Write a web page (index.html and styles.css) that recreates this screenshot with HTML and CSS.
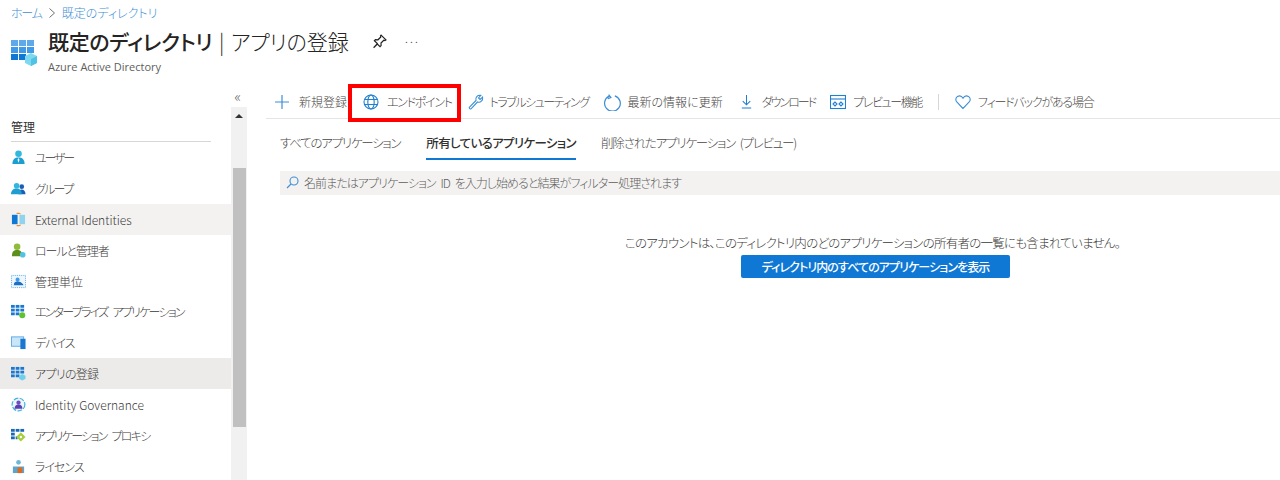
FILE: index.html
```html
<!DOCTYPE html>
<html lang="ja">
<head>
<meta charset="utf-8">
<title>アプリの登録</title>
<link rel="stylesheet" href="styles.css">
</head>
<body>
<div class="page">
  <nav class="crumbs"><a class="home">ホーム</a><svg class="chev" width="8" height="12" viewBox="0 0 8 12"><path d="M1.5 1.5 6.5 6l-5 4.500" fill="none" stroke="#707070"/></svg><a>既定のディレクトリ</a></nav>
  <header class="head">
    <svg class="logo" width="27" height="27" viewBox="0 0 27 27">
      <g fill="#3f9be8"><rect x="0" y="0" width="7" height="6" fill="#5ea9ea"/><rect x="8" y="0" width="7" height="6" fill="#5ea9ea"/><rect x="16" y="0" width="7" height="6" fill="#5ea9ea"/><rect x="0" y="7" width="7" height="6"/><rect x="8" y="7" width="7" height="6"/><rect x="16" y="7" width="7" height="6"/><rect x="0" y="14" width="7" height="6" fill="#0f78d4"/><rect x="8" y="14" width="7" height="6" fill="#0f78d4"/></g>
      <path d="M20 13l6 3v7l-6 3-6-3v-7z" fill="#7fd9ee"/><path d="M20 19l6-3v7l-6 3z" fill="#50c3e4"/>
    </svg>
    <div class="head-text">
      <div class="title-row">
        <h1 class="title"><b>既定のディレクトリ</b> <span class="pipe">|</span> <span class="title-rest">アプリの登録</span></h1>
        <svg class="pin" width="15" height="15" viewBox="0 0 14 14"><path d="M8.500 1 13 5.500l-1 .6-1-.3-2.600 2.600.1 2.400-1 1L5 9.300 1.500 12.800 5 9 2.200 6.300l1-1 2.400.1L8.200 2.800l-.3-1z" fill="none" stroke="#222" stroke-width="1.100"/></svg>
        <span class="more">···</span>
      </div>
      <div class="subtitle">Azure Active Directory</div>
    </div>
  </header>
  <div class="body">
    <aside class="side">
      <div class="collapse">«</div>
      <div class="side-inner">
        <div class="menu">
          <div class="section">管理</div>
          <div class="item t20"><svg class="ic" viewBox="0 0 16 16"><circle cx="8" cy="4" r="3.500" fill="#32b8dc"/><path d="M1.500 15c0-5 2.500-7 6.500-7s6.500 2 6.500 7z" fill="#1c9fd0"/><path d="M8 8.500l-1 2 1 3 1-3z" fill="#fff"/></svg>ユーザー</div>
          <div class="item t16"><svg class="ic" viewBox="0 0 16 16"><circle cx="11.500" cy="6" r="2.500" fill="#1a5fb4"/><path d="M8 14c0-3 1.500-5 3.500-5s4 2 4 5z" fill="#1a5fb4"/><circle cx="6" cy="5" r="3" fill="#32b8dc"/><path d="M0 14c0-4 2.500-6 6-6s5.500 2 5.500 6z" fill="#1c9fd0"/></svg>グループ</div>
          <div class="item hover"><svg class="ic" viewBox="0 0 16 16"><rect x="1" y="3" width="6" height="10" fill="#0f78d4"/><rect x="9" y="3" width="6" height="10" fill="#8fd3ee"/><path d="M6 1.500h3M6 14.500h3M8 1.500c2 0 2 0 2 1M8 14.500c2 0 2 0 2-1" fill="none" stroke="#f08a24" stroke-width="1.200"/></svg>External Identities</div>
          <div class="item t11"><svg class="ic" viewBox="0 0 16 16"><circle cx="6.500" cy="4" r="3.500" fill="#8fbc3a"/><path d="M1 14c0-5 2-6.500 5.500-6.500S12 9 12 14z" fill="#5e8f1c"/><circle cx="12.500" cy="12.500" r="3" fill="#50c3e4"/></svg>ロールと管理者</div>
          <div class="item"><svg class="ic" viewBox="0 0 16 16"><rect x=".5" y="1.500" width="15" height="13" fill="#eef6fd" stroke="#5ea9ea" stroke-dasharray="1 1"/><circle cx="7" cy="6" r="2.200" fill="#3f9be8"/><path d="M3 12c0-3 1.500-4 4-4s4 1 5 2 1.500 1 1 2z" fill="#1a6fc4"/></svg>管理単位</div>
          <div class="item t15"><svg class="ic" viewBox="0 0 16 16"><g fill="#1a78d0"><rect y="1" width="4" height="3"/><rect x="5" y="1" width="4" height="3"/><rect x="10" y="1" width="4" height="3"/><rect y="5" width="4" height="3"/><rect x="5" y="5" width="4" height="3"/><rect x="10" y="5" width="4" height="3"/><rect y="9" width="4" height="3"/><rect x="5" y="9" width="4" height="3"/></g><circle cx="12" cy="12" r="3.200" fill="#5fc232"/></svg>エンタープライズ アプリケーション</div>
          <div class="item t11"><svg class="ic" viewBox="0 0 16 16"><rect x=".5" y="2" width="13" height="10" fill="#c9e6f8" stroke="#5ea9ea"/><rect x="10" y="4" width="5.500" height="11" fill="#1a78d0"/></svg>デバイス</div>
          <div class="item active t7"><svg class="ic" viewBox="0 0 16 16"><g fill="#1a78d0"><rect y="1" width="4" height="3"/><rect x="5" y="1" width="4" height="3"/><rect x="10" y="1" width="4" height="3"/><rect y="5" width="4" height="3"/><rect x="5" y="5" width="4" height="3"/><rect x="10" y="5" width="4" height="3"/><rect y="9" width="4" height="3"/><rect x="5" y="9" width="4" height="3"/></g><path d="M12 8.500l3.500 1.800v3.400L12 15.500l-3.500-1.800v-3.400z" fill="#6fd0ec"/></svg>アプリの登録</div>
          <div class="item"><svg class="ic" viewBox="0 0 16 16"><circle cx="8" cy="8" r="6.800" fill="#eef6fd" stroke="#40b4de" stroke-width="1.300" stroke-dasharray="5 1.500"/><circle cx="8" cy="6" r="2.300" fill="#6a4fc0"/><path d="M3.800 12.500c0-3 1.800-4.500 4.200-4.500s4.200 1.500 4.200 4.500z" fill="#5a3fb0"/></svg>Identity Governance</div>
          <div class="item t15"><svg class="ic" viewBox="0 0 16 16"><g fill="#1a68b8"><rect y="1" width="4" height="3"/><rect x="5" y="1" width="4" height="3"/><rect x="10" y="1" width="4" height="3"/><rect y="5" width="4" height="3"/><rect y="9" width="4" height="3"/><rect x="5" y="9" width="2" height="3"/></g><path d="M10.500 4.500 15.500 9.500l-5 5-5-5z" fill="#a8cf3a"/><circle cx="10.500" cy="9.500" r="1.300" fill="#fff"/></svg>アプリケーション プロキシ</div>
          <div class="item t10"><svg class="ic" viewBox="0 0 16 16"><circle cx="8" cy="3.500" r="2.500" fill="#6fb6dc"/><path d="M2 15V8h12v7z" fill="#5ea5cc"/><rect x="7" y="9" width="5" height="6" fill="#e06a1c"/></svg>ライセンス</div>
        </div>
        <div class="scroll">
          <div class="scroll-btn"><span class="tri"></span></div>
          <div class="thumb"></div>
        </div>
      </div>
    </aside>
    <main class="main">
      <div class="bar">
        <span class="cmd c1"><svg class="cic" viewBox="0 0 16 16"><path d="M8 1v14M1 8h14" stroke="#3d8fd6" stroke-width="1.200" fill="none"/></svg>新規登録</span>
        <span class="cmd c2"><svg class="cic" viewBox="0 0 16 16"><g fill="none" stroke="#1f7fd0" stroke-width="1.100"><circle cx="8" cy="8" r="7"/><ellipse cx="8" cy="8" rx="3.200" ry="7"/><path d="M1.600 5.500h12.800M1.600 10.500h12.800"/></g></svg>エンドポイント</span>
        <span class="cmd c3"><svg class="cic" viewBox="0 0 16 16"><path d="M1.300 13.300 8 6.500C7 3.500 9.500.8 12.800 1.400L10.500 3.900l1.600 1.600 2.500-2.300C15.200 6.500 12.500 9 9.500 8l-6.500 6.800a1.200 1.200 0 0 1-1.700-1.500z" fill="none" stroke="#3d8fd6" stroke-width="1.100"/></svg>トラブルシューティング</span>
        <span class="cmd c4"><svg class="cic" viewBox="0 0 16 16"><path d="M5 1.500 7 4 4.300 5M5.500 2.800a7 7 0 1 0 5-.3" fill="none" stroke="#3d8fd6" stroke-width="1.100"/></svg>最新の情報に更新</span>
        <span class="cmd c5"><svg class="cic" viewBox="0 0 16 16"><path d="M8 1v10M4 7.500 8 11.500l4-4M3 15h10" fill="none" stroke="#1f7fd0" stroke-width="1.100"/></svg>ダウンロード</span>
        <span class="cmd c6"><svg class="cic" viewBox="0 0 16 16"><g fill="none" stroke="#1f7fd0" stroke-width="1.100"><rect x=".5" y="1.500" width="15" height="13"/><path d="M.5 5h15"/><path d="M5 8 3 10l2 2 2-2zM11 8 9 10l2 2 2-2z"/></g></svg>プレビュー機能</span>
        <span class="sep"></span>
        <span class="cmd c7"><svg class="cic" viewBox="0 0 16 16"><path d="M8 14.500 1.800 8C.2 6.200.6 3.500 2.500 2.500 4.500 1.500 6.800 2.200 8 4.200c1.200-2 3.500-2.700 5.500-1.700 1.900 1 2.300 3.700.7 5.500z" fill="none" stroke="#3d8fd6" stroke-width="1.100"/></svg>フィードバックがある場合</span>
      </div>
      <div class="tabs">
        <span class="tab ta">すべてのアプリケーション</span>
        <span class="tab on">所有しているアプリケーション</span>
        <span class="tab tc">削除されたアプリケーション (プレビュー)</span>
      </div>
      <div class="search"><svg class="sic" width="13" height="13" viewBox="0 0 13 13"><circle cx="8" cy="5" r="4" fill="none" stroke="#3d8fd6" stroke-width="1.100"/><path d="M5 8l-4 4" stroke="#3d8fd6" stroke-width="1.100"/></svg>名前またはアプリケーション ID を入力し始めると結果がフィルター処理されます</div>
      <div class="empty">
        <p class="msg">このアカウントは、このディレクトリ内のどのアプリケーションの所有者の一覧にも含まれていません。</p>
        <button class="primary">ディレクトリ内のすべてのアプリケーションを表示</button>
      </div>
    </main>
  </div>
  <div class="callout"></div>
</div>
</body>
</html>
```
FILE: styles.css
```css
* { box-sizing: border-box; }
html, body { margin: 0; padding: 0; height: 100%; background: #fff; overflow: hidden; }
body { font-family: "Noto Sans CJK JP", "Open Sans", sans-serif; font-size: 12px; color: #323130; font-weight: 300; font-feature-settings: "palt"; }
.page { position: relative; width: 1280px; height: 480px; overflow: hidden; }
.crumbs { display: flex; align-items: center; gap: 6px; height: 24px; padding: 1px 0 0 11px; font-size: 12px; color: #3d8fd6; }
.home { letter-spacing: -1.200px; }
.head { display: flex; height: 64px; padding: 2px 0 0 11px; }
.logo { margin-top: 14px; margin-right: 10px; }
.head-text { display: flex; flex-direction: column; }
.title-row { display: flex; align-items: center; height: 30px; }
.title { margin: 0; font-size: 21px; font-weight: 300; color: #252423; line-height: 30px; white-space: nowrap; }
.title b { font-weight: 500; letter-spacing: -.35px; }
.pipe { margin-left: 2px; }
.title-rest { margin-left: 2px; letter-spacing: -.1px; }
.pin { margin-left: 23px; }
.more { margin-left: 17px; font-size: 11px; color: #444; letter-spacing: -1px; }
.subtitle { font-family: "Open Sans", sans-serif; font-size: 11px; color: #605e5c; margin-top: 3px; font-weight: 400; }
.body { display: flex; height: 392px; }
.side { width: 247px; flex: none; display: flex; flex-direction: column; }
.collapse { height: 19px; text-align: right; padding-right: 6px; font-size: 15px; line-height: 16px; color: #605e5c; }
.side-inner { display: flex; flex: 1; min-height: 0; }
.menu { width: 231px; flex: none; overflow: hidden; }
.section { height: 35px; margin: 0 20px 0 11px; padding-top: 11px; line-height: 18px; font-weight: 400; font-size: 12px; color: #323130; border-bottom: 1px solid #d8d6d4; }
.item { display: flex; align-items: center; height: 30.900px; padding-left: 11px; gap: 9px; color: #3b3a39; white-space: nowrap; }
.item .ic { width: 15px; height: 15px; flex: none; }
.t20 { letter-spacing: -2.200px; }
.t16 { letter-spacing: -1.700px; }
.t15 { letter-spacing: -1.750px; word-spacing: 4px; }
.t11 { letter-spacing: -1.100px; }
.t10 { letter-spacing: -1px; }
.t7 { letter-spacing: -.7px; }
.hover { background: #f3f2f1; }
.active { background: #edebe9; }
.scroll { width: 16px; flex: none; background: #f1f1f1; }
.scroll-btn { height: 18px; display: flex; justify-content: center; padding-top: 7px; background: #f1f1f1; }
.tri { width: 0; height: 0; border: 4px solid transparent; border-top: 0; border-bottom: 4px solid #333; }
.thumb { height: 259px; margin: 43px 1px 0 2px; background: #c0c0c0; }
.main { flex: 1; min-width: 0; padding-left: 19px; display: flex; flex-direction: column; }
.bar { display: flex; align-items: center; height: 31px; padding: 0 0 3px 8px; border-bottom: 1px solid #e5e5e5; white-space: nowrap; }
.cmd { display: flex; align-items: center; gap: 9px; margin-right: 15px; color: #484644; font-size: 12px; }
.cic { width: 16px; height: 16px; flex: none; }
.c1 { margin-right: 16px; }
.c2 { gap: 8px; letter-spacing: -1.300px; margin-right: 16px; }
.c3 { gap: 6px; letter-spacing: -1.500px; margin-right: 14px; }
.c4 { gap: 7px; margin-right: 16px; }
.c4 .cic { width: 18px; height: 18px; }
.c5 { gap: 8px; letter-spacing: -2px; }
.c5 .cic { width: 15px; height: 15px; }
.c6 { gap: 7px; letter-spacing: -1.400px; }
.c7 { gap: 7px; letter-spacing: -1.200px; }
.sep { width: 1px; height: 16px; background: #d8d6d4; margin: 0 16px 0 1px; }
.tabs { display: flex; gap: 26px; height: 41px; padding: 13px 0 0 14px; }
.tab { height: 28px; font-size: 12.500px; color: #484644; line-height: 22px; white-space: nowrap; }
.ta { letter-spacing: -1.250px; }
.tc { letter-spacing: -1.200px; word-spacing: 3px; margin-left: -1px; }
.tab.on { font-weight: 500; color: #323130; border-bottom: 2px solid #0f78d4; letter-spacing: -.65px; }
.search { display: flex; align-items: center; gap: 5px; height: 24px; margin: 11px 0 0 14px; padding: 0 0 1px 6px; background: #f3f2f1; color: #605e5c; font-size: 12px; letter-spacing: -.95px; word-spacing: 3px; }
.empty { display: flex; flex-direction: column; align-items: center; padding: 38px 0 0 205px; }
.msg { margin: 0 6px 0 0; height: 22px; line-height: 20px; color: #3b3a39; font-size: 12.500px; letter-spacing: -.75px; }
.primary { width: 269px; height: 23px; border: 0; border-radius: 2px; background: #0f78d4; color: #fff; font: 500 12px "Noto Sans CJK JP", sans-serif; font-feature-settings: "palt"; letter-spacing: -.9px; padding: 0; white-space: nowrap; }
.callout { position: absolute; left: 348px; top: 84px; width: 113px; height: 38px; border: 4px solid #f00; }
```
